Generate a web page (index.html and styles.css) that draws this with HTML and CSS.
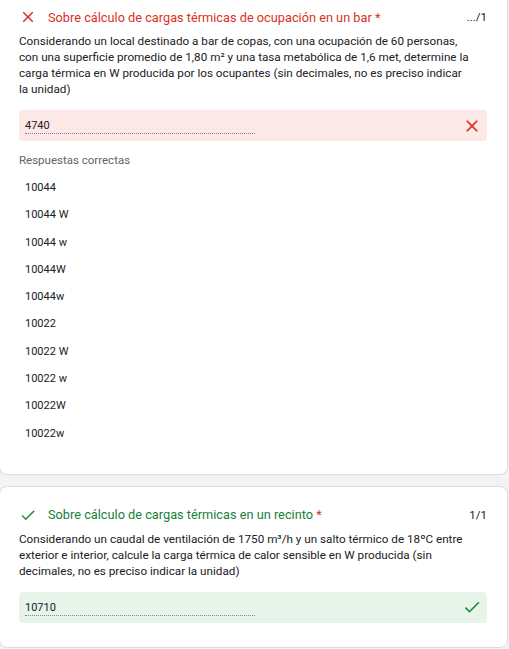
FILE: index.html
```html
<!DOCTYPE html>
<html lang="es">
<head>
<meta charset="utf-8">
<link rel="stylesheet" href="styles.css">
</head>
<body>
<div class="page">
  <section class="card card--cut">
    <div class="qhead">
      <svg class="qicon" viewBox="0 0 24 24"><path fill="#d93025" d="M19 6.41L17.59 5 12 10.59 6.41 5 5 6.41 10.59 12 5 17.59 6.41 19 12 13.41 17.59 19 19 17.59 13.41 12z"/></svg>
      <span class="qtitle qtitle--wrong">Sobre cálculo de cargas térmicas de ocupación en un bar <span class="req">*</span></span>
      <span class="score">.../1</span>
    </div>
    <p class="qtext">Considerando un local destinado a bar de copas, con una ocupación de 60 personas, con una superficie promedio de 1,80 m² y una tasa metabólica de 1,6 met, determine la carga térmica en W producida por los ocupantes (sin decimales, no es preciso indicar la unidad)</p>
    <div class="answer answer--wrong">
      <span class="answer-val">4740</span>
      <svg class="aicon" viewBox="0 0 24 24"><path fill="#d93025" d="M19 6.41L17.59 5 12 10.59 6.41 5 5 6.41 10.59 12 5 17.59 6.41 19 12 13.41 17.59 19 19 17.59 13.41 12z"/></svg>
    </div>
    <div class="correct-label">Respuestas correctas</div>
    <ul class="correct-list">
      <li>10044</li>
      <li>10044 W</li>
      <li>10044 w</li>
      <li>10044W</li>
      <li>10044w</li>
      <li>10022</li>
      <li>10022 W</li>
      <li>10022 w</li>
      <li>10022W</li>
      <li>10022w</li>
    </ul>
  </section>
  <section class="card">
    <div class="qhead">
      <svg class="qicon" viewBox="0 0 24 24"><path fill="#1e8e3e" d="M9 16.17L4.83 12l-1.42 1.41L9 19 21 7l-1.41-1.41z"/></svg>
      <span class="qtitle qtitle--right">Sobre cálculo de cargas térmicas en un recinto <span class="req">*</span></span>
      <span class="score">1/1</span>
    </div>
    <p class="qtext">Considerando un caudal de ventilación de 1750 m³/h y un salto térmico de 18ºC entre exterior e interior, calcule la carga térmica de calor sensible en W producida (sin decimales, no es preciso indicar la unidad)</p>
    <div class="answer answer--right">
      <span class="answer-val">10710</span>
      <svg class="aicon" viewBox="0 0 24 24"><path fill="#1e8e3e" d="M9 16.17L4.83 12l-1.42 1.41L9 19 21 7l-1.41-1.41z"/></svg>
    </div>
  </section>
</div>
</body>
</html>
```

FILE: styles.css
```css
* { box-sizing: border-box; }
html, body {
  margin: 0;
  padding: 0;
  background: #f1f3f4;
}
body {
  font-family: Roboto, "Noto Sans", Arial, sans-serif;
  color: #202124;
  width: 509px;
  height: 649px;
  overflow: hidden;
}
.page {
  display: flex;
  flex-direction: column;
  gap: 11px;
}
.card {
  background: #fff;
  border: 1px solid #dadce0;
  border-radius: 8px;
  width: 509px;
  margin-left: -1px;
  padding: 18px 20px 24px 19px;
}
.card--cut {
  border-top: none;
  border-top-left-radius: 0;
  border-top-right-radius: 0;
  padding-top: 7px;
  padding-bottom: 27px;
}
.qhead {
  display: flex;
  align-items: center;
  height: 20px;
}
.qicon {
  width: 18px;
  height: 18px;
  flex: none;
  margin-right: 11px;
}
.qtitle {
  font-size: 12.75px;
  flex: 1;
  white-space: nowrap;
}
.qtitle--wrong { color: #d93025; }
.qtitle--right { color: #188038; }
.req { color: #d93025; }
.score {
  font-size: 11.5px;
  color: #202124;
}
.qtext {
  margin: 6px 0 0;
  width: 453px;
  font-size: 11.7px;
  line-height: 16px;
  color: #202124;
}
.answer {
  display: flex;
  align-items: center;
  justify-content: space-between;
  height: 31px;
  margin-top: 13px;
  border-radius: 4px;
  padding: 0 5px 0 6px;
}
.answer--wrong { background: #fce8e6; }
.answer--right { background: #e6f4ea; }
.answer-val {
  width: 230px;
  font-size: 11px;
  line-height: 14px;
  padding-top: 2px;
  border-bottom: 1px dotted #80868b;
  color: #202124;
}
.aicon {
  width: 20px;
  height: 20px;
  flex: none;
}
.correct-label {
  margin-top: 12px;
  font-size: 11.5px;
  color: #5f6368;
  line-height: 14px;
}
.correct-list {
  list-style: none;
  margin: 7px 0 0;
  padding: 0 0 0 6px;
}
.correct-list li {
  font-size: 11px;
  line-height: 27.3px;
  color: #202124;
}
```
